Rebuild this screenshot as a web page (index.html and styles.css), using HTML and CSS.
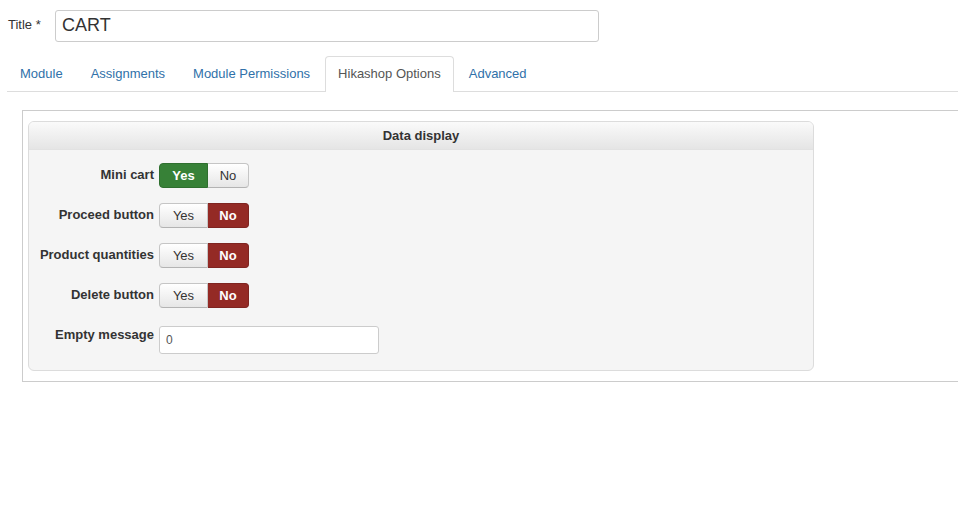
FILE: index.html
```html
<!DOCTYPE html>
<html>
<head>
<meta charset="utf-8">
<link rel="stylesheet" href="styles.css">
</head>
<body>
<div class="title-row">
  <label class="title-label">Title *</label>
  <input class="title-input" type="text" value="CART">
</div>
<ul class="tabs">
  <li class="tab"><a>Module</a></li>
  <li class="tab"><a>Assignments</a></li>
  <li class="tab"><a>Module Permissions</a></li>
  <li class="tab active"><a>Hikashop Options</a></li>
  <li class="tab"><a>Advanced</a></li>
</ul>
<div class="tab-content">
  <div class="panel">
    <div class="panel-head">Data display</div>
    <div class="panel-body">
      <div class="row">
        <div class="lbl">Mini cart</div>
        <div class="yesno"><span class="btn yes on-yes">Yes</span><span class="btn no">No</span></div>
      </div>
      <div class="row">
        <div class="lbl">Proceed button</div>
        <div class="yesno"><span class="btn yes">Yes</span><span class="btn no on-no">No</span></div>
      </div>
      <div class="row">
        <div class="lbl">Product quantities</div>
        <div class="yesno"><span class="btn yes">Yes</span><span class="btn no on-no">No</span></div>
      </div>
      <div class="row">
        <div class="lbl">Delete button</div>
        <div class="yesno"><span class="btn yes">Yes</span><span class="btn no on-no">No</span></div>
      </div>
      <div class="row last">
        <div class="lbl">Empty message</div>
        <input class="msg-input" type="text" value="0">
      </div>
    </div>
  </div>
</div>
</body>
</html>
```
FILE: styles.css
```css
html, body {
  margin: 0;
  padding: 0;
  background: #fff;
  font-family: "Liberation Sans", Arial, sans-serif;
  color: #333;
  overflow: hidden;
}
.title-row {
  display: flex;
  align-items: center;
  padding: 10px 0 0 8px;
  height: 31px;
}
.title-label {
  font-size: 13px;
  width: 47px;
  margin-top: -2px;
}
.title-input {
  box-sizing: border-box;
  width: 544px;
  height: 32px;
  border: 1px solid #ccc;
  border-radius: 3px;
  padding: 0 6px;
  font-family: "Liberation Sans", Arial, sans-serif;
  font-size: 18px;
  color: #333;
  outline: none;
}
.tabs {
  list-style: none;
  margin: 15px 0 0 7px;
  padding: 0;
  display: flex;
  border-bottom: 1px solid #ddd;
  height: 35px;
}
.tab {
  margin-right: 2px;
  margin-bottom: -1px;
}
.tab a {
  display: block;
  padding: 8px 12px;
  line-height: 18px;
  font-size: 13px;
  color: #3071a9;
  border: 1px solid transparent;
  border-bottom: none;
  border-radius: 4px 4px 0 0;
  height: 18px;
}
.tab.active a {
  color: #555;
  background: #fff;
  border-color: #ddd;
  height: 19px;
}
.tab-content {
  margin: 18px 0 0 22px;
  border: 1px solid #ccc;
  border-right: none;
  padding: 10px 0 10px 5px;
}
.panel {
  width: 784px;
  border: 1px solid #dcdcdc;
  border-radius: 6px;
  background: #f5f5f5;
  overflow: hidden;
}
.panel-head {
  height: 27px;
  line-height: 27px;
  text-align: center;
  font-weight: bold;
  font-size: 13px;
  color: #333;
  background: linear-gradient(#fafafa, #e5e5e5);
  border-bottom: 1px solid #e2e2e2;
}
.panel-body {
  padding: 13px 0 17px 0;
}
.row {
  display: flex;
  align-items: flex-start;
  height: 40px;
}
.row.last {
  height: 30px;
}
.lbl {
  width: 125px;
  padding-right: 5px;
  text-align: right;
  font-weight: bold;
  font-size: 13px;
  line-height: 16px;
  padding-top: 4px;
  color: #333;
}
.yesno {
  display: flex;
  height: 25px;
}
.btn {
  box-sizing: border-box;
  height: 25px;
  line-height: 23px;
  font-size: 13px;
  text-align: center;
  color: #333;
  border: 1px solid #c5c5c5;
  border-bottom-color: #b3b3b3;
  background: linear-gradient(#ffffff, #e6e6e6);
}
.btn.yes {
  width: 49px;
  border-radius: 4px 0 0 4px;
}
.btn.no {
  width: 41px;
  border-left: none;
  border-radius: 0 4px 4px 0;
}
.btn.on-yes {
  background: #378137;
  border-color: #2f6f2f;
  color: #fff;
  font-weight: bold;
}
.btn.on-no {
  background: #942a25;
  border-color: #7f2420;
  color: #fff;
  font-weight: bold;
}
.msg-input {
  box-sizing: border-box;
  margin-top: 3px;
  width: 220px;
  height: 28px;
  border: 1px solid #ccc;
  border-radius: 3px;
  padding: 0 6px;
  font-family: "Liberation Sans", Arial, sans-serif;
  font-size: 12px;
  color: #555;
  background: #fff;
  outline: none;
}
```
